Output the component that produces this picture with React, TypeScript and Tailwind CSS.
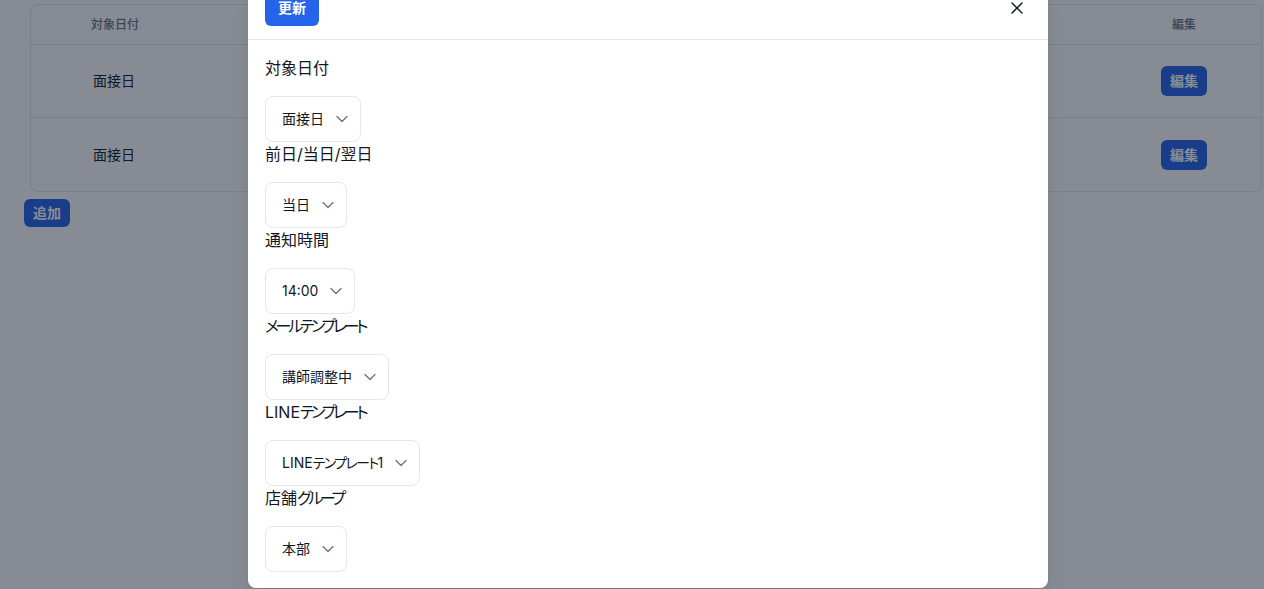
import { X } from "lucide-react";

const fields = [
  { label: "対象日付", value: "面接日" },
  { label: "前日/当日/翌日", value: "当日" },
  { label: "通知時間", value: "14:00" },
  { label: "メールテンプレート", value: "講師調整中" },
  { label: "LINEテンプレート", value: "LINEテンプレート1" },
  { label: "店舗グループ", value: "本部" },
];

const rows = ["面接日", "面接日"];

// katakana in the reference renders narrower than Noto's, so tighten those runs
function Jp({ text, kana }: { text: string; kana: string }) {
  return (
    <>
      {text.split(/([\u30A0-\u30FF]+)/).map((part, i) =>
        /[\u30A0-\u30FF]/.test(part) ? (
          <span key={i} className={kana}>{part}</span>
        ) : (
          <span key={i}>{part}</span>
        )
      )}
    </>
  );
}

function Chevron() {
  return (
    <svg width="12" height="8" viewBox="0 0 12 8" fill="none" stroke="#6b7280" strokeWidth="1.3" strokeLinecap="round" strokeLinejoin="round">
      <path d="M1 1.5 6 6.5 11 1.5" />
    </svg>
  );
}

function SelectBox({ value }: { value: string }) {
  return (
    <div className="flex">
      <button className="flex items-center gap-3 pl-4 pr-3 py-3 border border-gray-200 rounded-lg bg-white text-sm leading-5 text-gray-900">
        <span>
          <Jp text={value} kana="tracking-[-1.6px]" />
        </span>
        <Chevron />
      </button>
    </div>
  );
}

export default function App() {
  return (
    <div className="relative w-full h-[589px] overflow-hidden bg-white font-['Inter','Noto_Sans_CJK_JP',sans-serif] [font-feature-settings:'palt']">
      {/* page behind the modal */}
      <div className="flex flex-col items-start gap-[7px] pl-6 pt-1">
        <div className="ml-[6px] w-[1232px] border border-gray-200 rounded-lg">
          <div className="flex h-[40px] items-center border-b border-gray-200 text-xs font-medium text-gray-500">
            <div className="w-[168px] text-center">対象日付</div>
            <div className="flex-1" />
            <div className="w-[154px] text-center">編集</div>
          </div>
          {rows.map((r, i) => (
            <div key={i} className={`flex h-[73px] items-center text-sm text-gray-900 ${i === 0 ? "border-b border-gray-200" : ""}`}>
              <div className="w-[166px] text-center">{r}</div>
              <div className="flex-1" />
              <div className="w-[154px] flex justify-center">
                <button className="px-[9px] py-[5px] rounded-md bg-[#2563eb] text-white text-sm leading-5 font-bold">編集</button>
              </div>
            </div>
          ))}
        </div>
        <button className="px-[9px] py-1 rounded-md bg-[#2563eb] text-white text-sm leading-5 font-bold">追加</button>
      </div>

      {/* overlay + modal */}
      <div className="absolute inset-0 bg-gray-900/50 flex justify-center pl-8">
        <div className="w-[800px] -mt-[22px] self-start bg-white rounded-lg shadow-xl flex flex-col">
          <div className="flex items-center justify-between pl-[17px] pr-4 pt-3 pb-[13px] border-b border-gray-200">
            <button className="px-[13px] py-2 rounded-md bg-[#2563eb] text-white text-sm leading-5 font-bold">更新</button>
            <button className="p-1 mr-[1px] text-gray-900">
              <X size={20} strokeWidth={1.7} />
            </button>
          </div>
          <div className="flex flex-col pl-[17px] pr-4 pt-4 pb-4 text-gray-900">
            {fields.map((f) => (
              <div key={f.label} className="flex flex-col">
                <label className="text-base leading-6 mb-4">
                  <Jp text={f.label} kana="tracking-[-3.3px]" />
                </label>
                <SelectBox value={f.value} />
              </div>
            ))}
          </div>
        </div>
      </div>
    </div>
  );
}
